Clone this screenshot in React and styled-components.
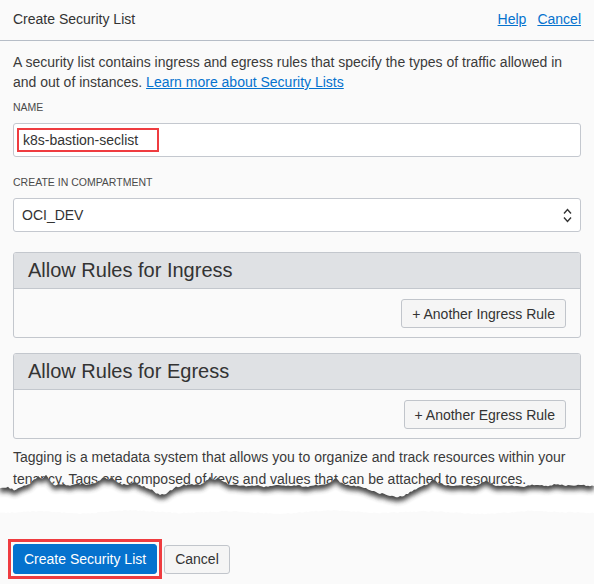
import React from "react";
import styled, { createGlobalStyle } from "styled-components";

const Global = createGlobalStyle`
  html, body { margin: 0; padding: 0; background: #fafafa; }
  body { font-family: "Liberation Sans", Arial, sans-serif; color: #333; }
  * { box-sizing: border-box; }
`;

const Page = styled.div`
  width: 594px;
  height: 584px;
  overflow: hidden;
  background: #fafafa;
  display: flex;
  flex-direction: column;
`;

const Header = styled.header`
  height: 41px;
  display: flex;
  align-items: center;
  justify-content: space-between;
  padding: 0 13px 3px;
  border-bottom: 1px solid #b6bdc7;
`;

const Title = styled.h1`
  margin: 0;
  font-size: 14px;
  font-weight: normal;
  color: #333;
`;

const Links = styled.nav`
  display: flex;
  gap: 11px;
`;

const Link = styled.a`
  font-size: 14px;
  color: #0572ce;
  text-decoration: underline;
  cursor: pointer;
`;

const Content = styled.main`
  padding: 0 13px;
  display: flex;
  flex-direction: column;
`;

const Text = styled.p`
  margin: ${(p) => p.$mt}px 0 0;
  font-size: 14px;
  line-height: ${(p) => p.$lh}px;
  color: #3a3a3a;
`;

const InlineLink = styled.a`
  color: #0572ce;
  text-decoration: underline;
`;

const Label = styled.label`
  display: block;
  margin-top: ${(p) => p.$mt}px;
  font-size: 10.5px;
  line-height: 12px;
  color: #4a4a4a;
  text-transform: uppercase;
`;

const Field = styled.div`
  margin-top: 10px;
  height: 34px;
  border: 1px solid #c4c8cf;
  border-radius: 3px;
  background: #fff;
  display: flex;
  align-items: center;
  justify-content: space-between;
  padding: 0 ${(p) => p.$pr}px 0 ${(p) => p.$pl}px;
  font-size: 14px;
  color: #333;
`;

const Annotated = styled.span`
  display: inline-block;
  border: 2px solid #ef3c40;
  padding: 1px 19px 1px 4px;
  line-height: 18px;
`;

const Panel = styled.section`
  margin-top: ${(p) => p.$mt}px;
  border: 1px solid #c3c7cd;
  border-radius: 3px;
  overflow: hidden;
`;

const PanelHead = styled.h2`
  margin: 0;
  height: 36px;
  display: flex;
  align-items: center;
  padding-left: 14px;
  background: #dfe1e4;
  border-bottom: 1px solid #c3c7cd;
  font-size: 20px;
  font-weight: normal;
  color: #333;
`;

const PanelBody = styled.div`
  display: flex;
  justify-content: flex-end;
  padding: 10px 14px 9px;
`;

const Button = styled.button`
  height: ${(p) => p.$h || 29}px;
  padding: 0 ${(p) => p.$px || 10}px;
  font-family: "Liberation Sans", Arial, sans-serif;
  font-size: 14px;
  border-radius: 3px;
  border: 1px solid ${(p) => (p.$primary ? "#0572ce" : "#c1c5cb")};
  background: ${(p) => (p.$primary ? "#0572ce" : "#f5f5f5")};
  color: ${(p) => (p.$primary ? "#fff" : "#333")};
  cursor: pointer;
`;

const TearWrap = styled.div`
  margin-top: -19px;
  height: 62px;
  position: relative;
  line-height: 0;
`;

const Footer = styled.footer`
  margin-top: 6px;
  padding: 0 8px;
  display: flex;
  align-items: center;
  gap: 2px;
`;

const Highlight = styled.span`
  display: inline-flex;
  border: 3px solid #ef3c40;
  padding: 2px;
`;

function Chevrons() {
  return (
    <svg width="9" height="15" viewBox="0 0 9 15" fill="none">
      <polyline points="1,5.5 4.5,1.5 8,5.5" stroke="#333" strokeWidth="1.4" />
      <polyline points="1,9.5 4.5,13.5 8,9.5" stroke="#333" strokeWidth="1.4" />
    </svg>
  );
}

const edgePts = [
  [0, 488], [8, 486], [14, 489], [20, 486], [28, 484], [34, 479], [38, 475], [42, 478], [46, 474],
  [50, 480], [55, 484], [62, 483], [70, 485], [78, 483], [86, 484], [94, 482], [100, 480], [104, 476],
  [108, 479], [112, 477], [118, 482], [126, 484], [134, 481], [142, 485], [150, 488], [158, 493],
  [164, 494], [170, 490], [176, 486], [184, 484], [192, 483], [200, 484], [206, 480], [210, 476],
  [214, 479], [218, 476], [222, 480], [228, 483], [236, 484], [246, 485], [256, 484], [266, 486],
  [276, 484], [286, 485], [296, 484], [306, 486], [316, 484], [326, 483], [332, 480], [336, 477],
  [340, 481], [346, 484], [356, 485], [366, 487], [376, 491], [386, 494], [396, 496], [404, 495],
  [410, 491], [418, 487], [426, 484], [430, 481], [434, 478], [438, 482], [446, 484], [456, 485],
  [466, 484], [476, 485], [482, 482], [486, 479], [490, 482], [498, 485], [510, 484], [522, 486],
  [534, 484], [546, 485], [558, 483], [570, 485], [582, 484], [594, 485],
];

function jag(pts, top, amp) {
  const out = [];
  for (let i = 0; i < pts.length - 1; i++) {
    const [x0, y0] = pts[i];
    const [x1, y1] = pts[i + 1];
    const steps = Math.max(1, Math.round((x1 - x0) / 2));
    for (let s = 0; s < steps; s++) {
      const t = s / steps;
      const x = x0 + (x1 - x0) * t;
      const j = Math.sin(x * 12.9898) * 43758.5453;
      const r = (j - Math.floor(j) - 0.5) * amp;
      out.push([x, y0 + (y1 - y0) * t - top + r]);
    }
  }
  const last = pts[pts.length - 1];
  out.push([last[0], last[1] - top]);
  return out;
}

const fmt = (pts) => pts.map(([x, y]) => `${x.toFixed(1)},${y.toFixed(1)}`).join(" L");

function TornEdge() {
  const top = 470;
  const e1 = jag(edgePts, top, 1.6);
  const lowerPts = [
    [0, 512], [40, 510], [80, 513], [130, 509], [180, 512], [230, 510], [280, 513], [330, 509],
    [380, 512], [430, 510], [480, 513], [530, 510], [594, 512],
  ];
  const e2 = jag(lowerPts, top, 1.2);
  const whiteBand = `M${fmt(e1)} L${fmt([...e2].reverse())} Z`;
  const upper = `M0,-10 L594,-10 L${fmt([...e1].reverse())} Z`;
  const below = `M${fmt(e1)} L594,70 L0,70 Z`;
  return (
    <svg width="594" height="62" viewBox="0 0 594 62">
      <defs>
        <filter id="tearShadow" x="-5%" y="-50%" width="110%" height="200%">
          <feGaussianBlur stdDeviation="2.4" />
        </filter>
        <clipPath id="belowEdge">
          <path d={below} />
        </clipPath>
      </defs>
      <path d={whiteBand} fill="#ffffff" />
      <g clipPath="url(#belowEdge)">
        <path d={upper} fill="#3a3a3a" transform="translate(0,4.5)" filter="url(#tearShadow)" opacity="0.95" />
      </g>
    </svg>
  );
}

export default function App() {
  return (
    <Page>
      <Global />
      <Header>
        <Title>Create Security List</Title>
        <Links>
          <Link>Help</Link>
          <Link>Cancel</Link>
        </Links>
      </Header>
      <Content>
        <Text $mt={11} $lh={20}>
          A security list contains ingress and egress rules that specify the types of traffic allowed in
          and out of instances. <InlineLink>Learn more about Security Lists</InlineLink>
        </Text>
        <Label $mt={9}>Name</Label>
        <Field $pl={3} $pr={8}>
          <Annotated>k8s-bastion-seclist</Annotated>
        </Field>
        <Label $mt={19}>Create in Compartment</Label>
        <Field $pl={8} $pr={8}>
          <span>OCI_DEV</span>
          <Chevrons />
        </Field>
        <Panel $mt={20}>
          <PanelHead>Allow Rules for Ingress</PanelHead>
          <PanelBody>
            <Button>+ Another Ingress Rule</Button>
          </PanelBody>
        </Panel>
        <Panel $mt={15}>
          <PanelHead>Allow Rules for Egress</PanelHead>
          <PanelBody>
            <Button>+ Another Egress Rule</Button>
          </PanelBody>
        </Panel>
        <Text $mt={7} $lh={22}>
          Tagging is a metadata system that allows you to organize and track resources within your
          tenancy. Tags are composed of keys and values that can be attached to resources.
        </Text>
      </Content>
      <TearWrap>
        <TornEdge />
      </TearWrap>
      <Footer>
        <Highlight>
          <Button $primary $h={30} $px={10}>Create Security List</Button>
        </Highlight>
        <Button $px={10}>Cancel</Button>
      </Footer>
    </Page>
  );
}
